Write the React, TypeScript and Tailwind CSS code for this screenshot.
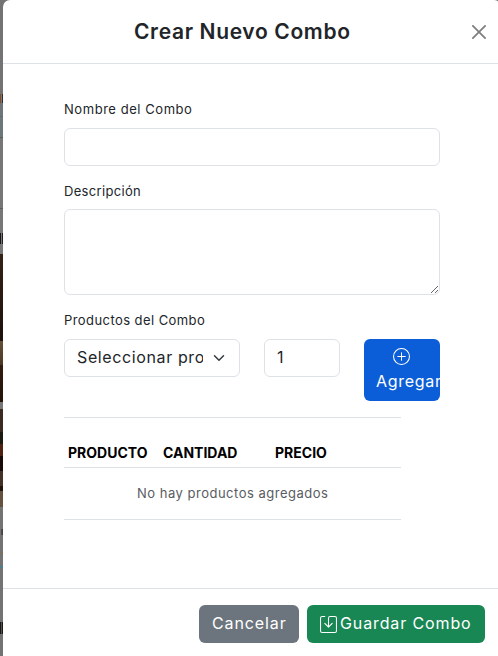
import { BsPlusCircle, BsSave } from 'react-icons/bs';

const strip = [
  'h-[94px] bg-[#737373]',
  'h-[9px] bg-[linear-gradient(90deg,#8a4a1c_0_1px,#77787a_1px_2px,#252d48_2px)]',
  'h-[13px] bg-[#6f7679]',
  'h-px bg-[#626a6d]',
  'h-[20px] bg-[#6c777b]',
  'h-px bg-[#555d60]',
  'h-[70px] bg-[#767676]',
  'h-px bg-[#5c5c5c]',
  'h-[24px] bg-[#777777]',
  'h-[11px] bg-[linear-gradient(90deg,#15171e_0_1px,#777_1px_2px,#2a1c18_2px)]',
  'h-[10px] bg-[#777777]',
  'h-[87px] bg-gradient-to-b from-[#352116] to-[#1d110c]',
  'h-[24px] bg-gradient-to-b from-[#65513a] to-[#4b3723]',
  'h-[37px] bg-gradient-to-b from-[#321c10] to-[#241208]',
  'h-[7px] bg-[#777777]',
  'h-[23px] bg-[#3b2a22]',
  'h-[12px] bg-[#1c1a10]',
  'h-[12px] bg-[#4e2213]',
  'h-[15px] bg-[#180b07]',
  'h-[15px] bg-[#453226]',
  'h-[5px] bg-[#20130c]',
  'h-[16px] bg-[#65523e]',
  'h-[22px] bg-[#737373]',
  'h-[6px] bg-[linear-gradient(90deg,#737373_0_1px,#5a4a42_1px_2px,#3a4658_2px)]',
  'h-[17px] bg-[#737373]',
  'h-[2px] bg-[linear-gradient(90deg,#737373_0_2px,#8c6a2a_2px)]',
  'h-[12px] bg-[#737373]',
  'h-[2px] bg-[#4a7f91]',
  'h-[54px] bg-[#737373]',
  'h-[12px] bg-[linear-gradient(90deg,#15171e_0_1px,#55504c_1px_2px,#21150f_2px)]',
  'grow bg-[#737373]',
];

function CloseIcon() {
  return (
    <svg viewBox="0 0 16 16" className="h-[14px] w-[14px]" fill="#000">
      <path d="M.293.293a1 1 0 0 1 1.414 0L8 6.586 14.293.293a1 1 0 1 1 1.414 1.414L9.414 8l6.293 6.293a1 1 0 0 1-1.414 1.414L8 9.414l-6.293 6.293a1 1 0 0 1-1.414-1.414L6.586 8 .293 1.707a1 1 0 0 1 0-1.414z" />
    </svg>
  );
}

function ChevronDown() {
  return (
    <svg viewBox="0 0 16 16" className="h-3 w-4 shrink-0" fill="none" stroke="#343a40" strokeWidth="2" strokeLinecap="round" strokeLinejoin="round">
      <path d="m2 5 6 6 6-6" />
    </svg>
  );
}

const label = 'block h-[19px] whitespace-nowrap text-[13px] leading-[19px]';
const field = 'rounded-md border border-[#dee2e6] bg-white text-base text-[#212529] outline-none';

export default function App() {
  return (
    <div className="flex h-[656px] w-[498px] overflow-hidden bg-[#737373] font-[Inter,'Open_Sans',sans-serif] text-[#212529]">
      <div className="flex w-[3px] shrink-0 flex-col">
        {strip.map((c) => (
          <div key={c} className={`shrink-0 ${c}`} />
        ))}
      </div>
      <div className="flex w-[498px] shrink-0 flex-col rounded-t-[7px] bg-white">
        <header className="flex h-16 shrink-0 items-center border-b border-[#dee2e6]">
          <h5 className="ml-[131px] w-[216px] whitespace-nowrap text-[21px] font-semibold tracking-[0.65px]">Crear Nuevo Combo</h5>
          <button className="ml-[121px] flex w-4 shrink-0 justify-center opacity-50"><CloseIcon /></button>
        </header>
        <main className="flex h-[524px] shrink-0 flex-col pl-[61px] pt-9">
          <label className={`${label} tracking-[0.55px]`}>Nombre del Combo</label>
          <input className={`${field} mt-[9px] h-[38px] w-[376px] shrink-0 px-3`} />
          <label className={`${label} mt-4 tracking-[0.32px]`}>Descripción</label>
          <textarea className={`${field} mt-2 h-[86px] w-[376px] shrink-0 px-3`} />
          <label className={`${label} mt-4 tracking-[0.43px]`}>Productos del Combo</label>
          <div className="mt-[9px] flex w-[376px] items-start gap-6">
            <div className={`${field} flex h-[38px] w-44 items-center justify-between px-3`}>
              <span className="w-[126px] overflow-hidden whitespace-nowrap pb-0.5 tracking-[0.62px]">Seleccionar producto</span>
              <ChevronDown />
            </div>
            <input className={`${field} h-[38px] w-[76px] px-3 pb-0.5`} defaultValue="1" />
            <button className="flex h-[62px] w-[76px] flex-col overflow-hidden rounded-md bg-[#0b5ed7] pl-3 pt-[9px] text-white">
              <BsPlusCircle className="ml-[17px] h-[17px] w-[17px] shrink-0" />
              <span className="mt-1 whitespace-nowrap text-base leading-6 tracking-[0.7px]">Agregar</span>
            </button>
          </div>
          <table className="mt-4 w-[337px] table-fixed border-t border-[#dee2e6] text-[13px]">
            <thead>
              <tr className="h-[50px] border-b border-[#dee2e6] text-left text-[14px] font-bold text-black">
                <th className="w-[95px] pl-1 pt-[19px]">PRODUCTO</th>
                <th className="w-[112px] pl-1 pt-[19px]">CANTIDAD</th>
                <th className="pl-1 pt-[19px]">PRECIO</th>
              </tr>
            </thead>
            <tbody>
              <tr className="h-[52px] border-b border-[#dee2e6]">
                <td colSpan={3} className="pl-[73px] tracking-[0.5px] text-[#595c5f]">No hay productos agregados</td>
              </tr>
            </tbody>
          </table>
        </main>
        <footer className="flex grow items-start border-t border-[#dee2e6] pl-[196px] pt-4">
          <button className="flex h-[38px] w-[100px] items-center rounded-md bg-[#6c757d] pb-0.5 pl-[13px] text-base tracking-[0.9px] text-white">Cancelar</button>
          <button className="ml-2 flex h-[38px] w-[178px] items-center rounded-md bg-[#198754] pl-[13px] text-base tracking-[0.88px] text-white">
            <BsSave className="mr-[3px] h-[17px] w-[17px]" />
            <span className="whitespace-nowrap pb-0.5">Guardar Combo</span>
          </button>
        </footer>
      </div>
    </div>
  );
}
